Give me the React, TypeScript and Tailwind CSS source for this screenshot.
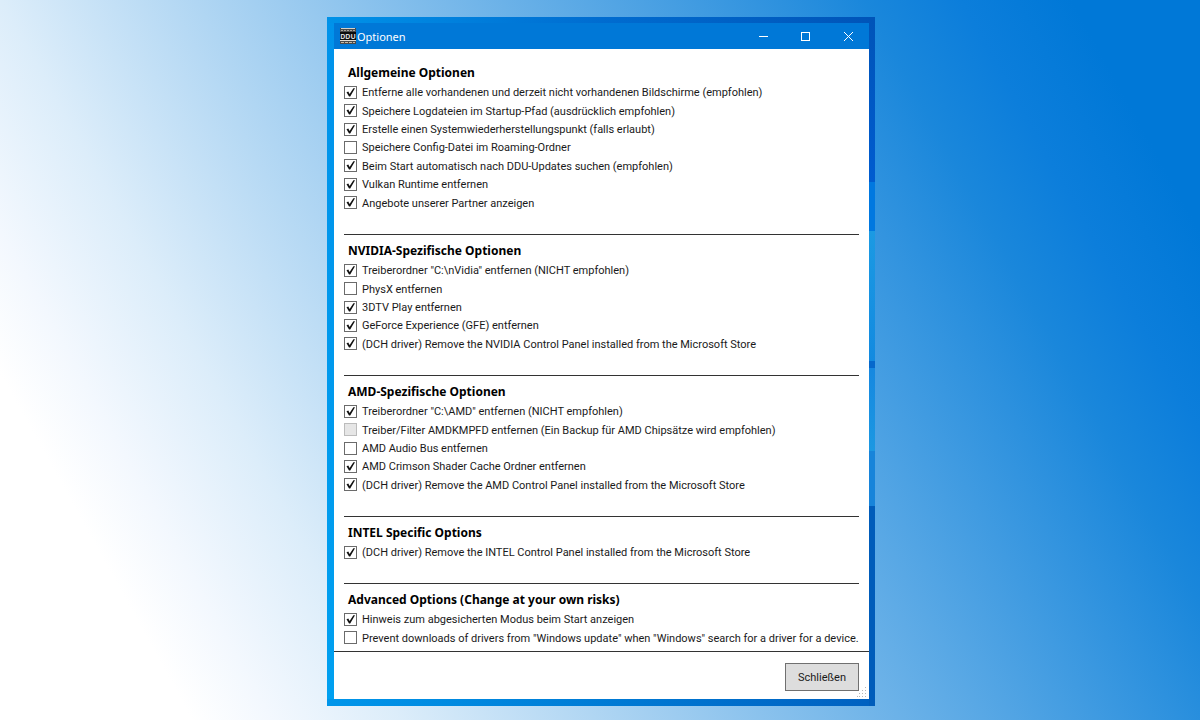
import { useState } from 'react';

interface Option {
  id: string;
  label: string;
  checked?: boolean;
  disabled?: boolean;
}

interface Section {
  title: string;
  listClass: string;
  options: Option[];
}

const sections: Section[] = [
  {
    title: 'Allgemeine Optionen',
    listClass: 'min-h-[129px]',
    options: [
      { id: 'monitors', label: 'Entferne alle vorhandenen und derzeit nicht vorhandenen Bildschirme (empfohlen)', checked: true },
      { id: 'logs', label: 'Speichere Logdateien im Startup-Pfad (ausdrücklich empfohlen)', checked: true },
      { id: 'restore', label: 'Erstelle einen Systemwiederherstellungspunkt (falls erlaubt)', checked: true },
      { id: 'roaming', label: 'Speichere Config-Datei im Roaming-Ordner' },
      { id: 'updates', label: 'Beim Start automatisch nach DDU-Updates suchen (empfohlen)', checked: true },
      { id: 'vulkan', label: 'Vulkan Runtime entfernen', checked: true },
      { id: 'offers', label: 'Angebote unserer Partner anzeigen', checked: true },
    ],
  },
  {
    title: 'NVIDIA-Spezifische Optionen',
    listClass: 'min-h-[92px]',
    options: [
      { id: 'nvidia-folder', label: 'Treiberordner "C:\\nVidia" entfernen (NICHT empfohlen)', checked: true },
      { id: 'physx', label: 'PhysX entfernen' },
      { id: '3dtv', label: '3DTV Play entfernen', checked: true },
      { id: 'gfe', label: 'GeForce Experience (GFE) entfernen', checked: true },
      { id: 'nvidia-dch', label: '(DCH driver) Remove the NVIDIA Control Panel installed from the Microsoft Store', checked: true },
    ],
  },
  {
    title: 'AMD-Spezifische Optionen',
    listClass: 'min-h-[92px]',
    options: [
      { id: 'amd-folder', label: 'Treiberordner "C:\\AMD" entfernen (NICHT empfohlen)', checked: true },
      { id: 'amdkmpfd', label: 'Treiber/Filter AMDKMPFD entfernen (Ein Backup für AMD Chipsätze wird empfohlen)', disabled: true },
      { id: 'amd-audio', label: 'AMD Audio Bus entfernen' },
      { id: 'amd-cache', label: 'AMD Crimson Shader Cache Ordner entfernen', checked: true },
      { id: 'amd-dch', label: '(DCH driver) Remove the AMD Control Panel installed from the Microsoft Store', checked: true },
    ],
  },
  {
    title: 'INTEL Specific Options',
    listClass: 'min-h-[18px]',
    options: [
      { id: 'intel-dch', label: '(DCH driver) Remove the INTEL Control Panel installed from the Microsoft Store', checked: true },
    ],
  },
  {
    title: 'Advanced Options (Change at your own risks)',
    listClass: 'min-h-[37px]',
    options: [
      { id: 'safe-mode', label: 'Hinweis zum abgesicherten Modus beim Start anzeigen', checked: true },
      { id: 'prevent', label: 'Prevent downloads of drivers from "Windows update" when "Windows" search for a driver for a device.' },
    ],
  },
];

function AppIcon() {
  return (
    <svg className="size-4" viewBox="0 0 16 16" aria-hidden="true">
      <rect width="16" height="16" fill="#4a4a4a" />
      <rect x="1" y="0" width="14" height="1" fill="#d6d0c8" />
      <path d="M1 2.500h14" stroke="#a9a49c" strokeDasharray="2 1" />
      <rect y="4" width="16" height="8" fill="#0c0c0c" />
      <text x="8" y="11" textAnchor="middle" fontSize="7" fontWeight="700" fill="#d8d8d8">DDU</text>
      <rect y="12" width="16" height="1" fill="#e3ddd4" />
      <path d="M1 14.500h14" stroke="#c9b9a4" strokeDasharray="3 1" />
    </svg>
  );
}

function TitleBar() {
  const control = 'flex h-full w-[42px] items-center justify-center hover:bg-white/20';

  return (
    <header className="flex h-[26px] items-center bg-[#0078d7] pl-1.5 text-white">
      <AppIcon />
      <h1 className="ml-px flex-1 pt-0.5 text-[11px] leading-4">Optionen</h1>
      <button type="button" aria-label="Minimieren" className={control}>
        <svg className="size-[11px]" viewBox="0 0 11 11">
          <path d="M0 5.500h9" stroke="#fff" />
        </svg>
      </button>
      <button type="button" aria-label="Maximieren" className={control}>
        <svg className="size-[11px]" viewBox="0 0 11 11">
          <rect x="0.500" y="1.500" width="8" height="8" fill="none" stroke="#fff" />
        </svg>
      </button>
      <button type="button" aria-label="Fenster schließen" className={control}>
        <svg className="size-[11px]" viewBox="0 0 11 11">
          <path d="M1 1l9 9M10 1l-9 9" stroke="#fff" />
        </svg>
      </button>
    </header>
  );
}

function OptionRow({ option }: { option: Option }) {
  const [checked, setChecked] = useState(!!option.checked);

  return (
    <li className="flex flex-1 items-center">
      <span className="relative flex">
        <input
          id={option.id}
          type="checkbox"
          checked={checked}
          disabled={option.disabled}
          onChange={(e) => setChecked(e.target.checked)}
          className="peer size-[13px] appearance-none border border-[#6b6b6b] bg-white disabled:border-[#bcbcbc] disabled:bg-[#e6e6e6]"
        />
        <svg className="pointer-events-none absolute inset-0 hidden size-[13px] peer-checked:block" viewBox="0 0 13 13">
          <path d="M2.500 6.200L4.300 5.600L5.600 8L9.400 2.200L11 2.200L6.200 10.600L5 10.600Z" fill="#111" />
        </svg>
      </span>
      <label
        htmlFor={option.id}
        className="pt-0.5 pl-[5px] font-[Roboto,sans-serif] text-[11px] leading-4 whitespace-nowrap text-[#1a1a1a]"
      >
        {option.label}
      </label>
    </li>
  );
}

function OptionSection({ section }: { section: Section }) {
  return (
    <section className="border-t border-[#333] pt-1.5 pb-[22px] first:border-t-0 first:pt-3.5 last:pb-1">
      <h2 className="pl-1 text-[12px] leading-5 font-bold text-black">{section.title}</h2>
      <ul className={`flex flex-col ${section.listClass}`}>
        {section.options.map((option) => (
          <OptionRow key={option.id} option={option} />
        ))}
      </ul>
    </section>
  );
}

function ResizeGrip() {
  return (
    <svg className="absolute right-0.5 bottom-0.5 size-[10px]" viewBox="0 0 10 10" fill="#b8b8b8" aria-hidden="true">
      <path d="M8 0h1v1h-1zM5 3h1v1h-1zM8 3h1v1h-1zM2 6h1v1h-1zM5 6h1v1h-1zM8 6h1v1h-1zM0 9h1v1h-1zM2 9h1v1h-1zM5 9h1v1h-1zM8 9h1v1h-1z" />
    </svg>
  );
}

export default function App() {
  return (
    <div className="flex min-h-screen items-start justify-center bg-[linear-gradient(61deg,#fff_12%,#f3f8fe_17%,#dcedfa_25%,#1a87db_79%,#0c7edb_85%,#0078d7_92%)] pt-[17px] pb-3.5 pl-0.5 font-['Noto_Sans',sans-serif]">
      <div className="w-full max-w-[548px] pt-1.5 pr-1.5 pb-[7px] pl-[7px] [background:linear-gradient(180deg,#0054b8_0%,#005cd0_24%,#0078e0_24%,#0078e0_31%,#1b9ae3_31%,#128ae0_50%,#0668cc_50%,#0668cc_51%,#1688e0_51%,#1b98e2_63%,#1784da_63%,#1784da_71%,#005cba_71%,#005cba_100%)_right/6px_100%_no-repeat,linear-gradient(90deg,#0096ea,#0060c0)_bottom/100%_7px_no-repeat,linear-gradient(90deg,#0092e8_0%,#006cd0_50%,#0054b8_100%)_top/100%_6px_no-repeat,linear-gradient(180deg,#0092ea,#00a0f0)]">
        <TitleBar />
        <main className="bg-white px-2.5">
          {sections.map((section) => (
            <OptionSection key={section.title} section={section} />
          ))}
        </main>
        <footer className="relative flex justify-end border-t border-[#333] bg-white px-2.5 pt-[11px] pb-2">
          <button
            type="button"
            className="h-7 w-[74px] border border-[#707070] bg-[#ddd] pt-0.5 font-[Roboto,sans-serif] text-[11px] text-[#1a1a1a] hover:bg-[#bee6fd]"
          >
            Schließen
          </button>
          <ResizeGrip />
        </footer>
      </div>
    </div>
  );
}
